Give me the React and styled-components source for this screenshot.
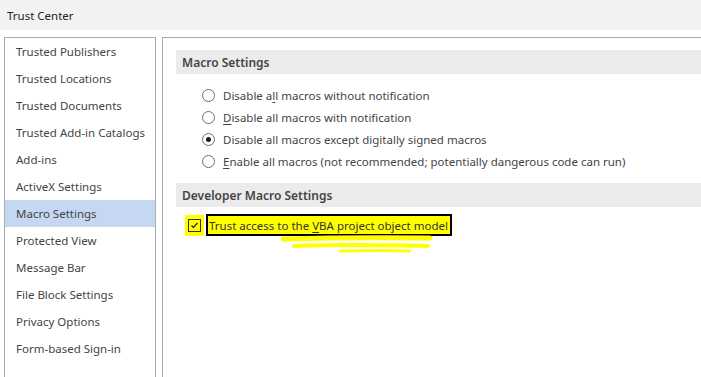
import React from 'react'
import styled, { createGlobalStyle } from 'styled-components'

const GlobalStyle = createGlobalStyle`
  body {
    margin: 0;
    background: #fff;
    font-family: "Noto Sans", "Open Sans", sans-serif;
    color: #444;
  }
`

const navItems = [
  'Trusted Publishers',
  'Trusted Locations',
  'Trusted Documents',
  'Trusted Add-in Catalogs',
  'Add-ins',
  'ActiveX Settings',
  'Macro Settings',
  'Protected View',
  'Message Bar',
  'File Block Settings',
  'Privacy Options',
  'Form-based Sign-in',
]

const Window = styled.div`
  width: 701px;
  height: 377px;
  overflow: hidden;
  display: flex;
  flex-direction: column;
`

const TitleBar = styled.div`
  height: 30px;
  background: #f2f2f2;
  padding-left: 7px;
  display: flex;
  align-items: center;
  font-size: 11.5px;
  color: #222;
`

const Body = styled.div`
  flex: 1;
  display: flex;
  gap: 6px;
  padding: 7px 0 0 4px;
`

const Nav = styled.ul`
  list-style: none;
  margin: 0;
  padding: 0;
  width: 150px;
  flex-shrink: 0;
  border: 1px solid #ababab;
  border-bottom: none;
`

const NavItem = styled.li`
  height: 27px;
  display: flex;
  align-items: center;
  padding-left: 11px;
  font-size: 11.5px;
  color: #444;
  background: ${p => (p.$active ? '#c5d7f1' : 'transparent')};
`

const Content = styled.div`
  flex: 1;
  border-top: 1px solid #ababab;
  border-left: 1px solid #ababab;
  padding: 12px 0 0 13px;
`

const SectionHead = styled.div`
  height: 24px;
  background: #ebebeb;
  display: flex;
  align-items: center;
  padding-left: 6px;
  font-size: 12px;
  font-weight: 600;
  color: #444;
  margin-bottom: ${p => p.$gap}px;
`

const Options = styled.div`
  padding-left: 26px;
  margin-bottom: 11px;
`

const OptionRow = styled.label`
  height: 22px;
  display: flex;
  align-items: center;
  gap: 8px;
  font-size: 11.5px;
  color: #444;
`

const Radio = styled.span`
  width: 11px;
  height: 11px;
  border-radius: 50%;
  border: 1px solid #6d6d6d;
  background: #fff;
  display: flex;
  align-items: center;
  justify-content: center;
  &::after {
    content: '';
    width: 5px;
    height: 5px;
    border-radius: 50%;
    background: ${p => (p.$checked ? '#1a1a1a' : 'transparent')};
  }
`

const Key = styled.span`
  text-decoration: underline;
  text-underline-offset: 2px;
`

const CheckRow = styled.div`
  position: relative;
  display: flex;
  align-items: center;
  gap: 2px;
  margin-top: 7px;
  padding-left: 9px;
  font-size: 11.5px;
`

const Marker = styled.span`
  background: #ffff00;
  padding: 4px 3px;
  display: flex;
`

const Checkbox = styled.span`
  width: 11px;
  height: 11px;
  border: 1px solid #333;
  background: #ffff00;
  display: flex;
  align-items: center;
  justify-content: center;
`

const Boxed = styled.span`
  background: #ffff00;
  border: 2px solid #000;
  height: 18px;
  display: flex;
  align-items: center;
  padding: 0 2px 0 1px;
  color: #333;
`

const Scribble = styled.svg`
  position: absolute;
  left: 104px;
  top: 21px;
  pointer-events: none;
`

export default function App() {
  return (
    <Window>
      <GlobalStyle />
      <TitleBar>Trust Center</TitleBar>
      <Body>
        <Nav>
          {navItems.map(item => (
            <NavItem key={item} $active={item === 'Macro Settings'}>
              {item}
            </NavItem>
          ))}
        </Nav>
        <Content>
          <SectionHead $gap={10}>Macro Settings</SectionHead>
          <Options>
            <OptionRow>
              <Radio />
              <span>
                Disable a<Key>l</Key>l macros without notification
              </span>
            </OptionRow>
            <OptionRow>
              <Radio />
              <span>
                <Key>D</Key>isable all macros with notification
              </span>
            </OptionRow>
            <OptionRow>
              <Radio $checked />
              <span>
                Disable all macros except di<Key>g</Key>itally signed macros
              </span>
            </OptionRow>
            <OptionRow>
              <Radio />
              <span>
                <Key>E</Key>nable all macros (not recommended; potentially dangerous code can run)
              </span>
            </OptionRow>
          </Options>
          <SectionHead $gap={0}>Developer Macro Settings</SectionHead>
          <CheckRow>
            <Marker>
              <Checkbox>
                <svg width="9" height="9" viewBox="0 0 9 9">
                  <path d="M1.5 4.5 L3.5 6.5 L7.5 2" fill="none" stroke="#222" strokeWidth="1.2" />
                </svg>
              </Checkbox>
            </Marker>
            <Boxed>
              <span>
                Trust access to the <Key>V</Key>BA project object model
              </span>
            </Boxed>
            <Scribble width="160" height="20" viewBox="0 0 160 20">
              <path d="M3 4 Q70 2 150 3" stroke="#ffff00" strokeWidth="5" fill="none" strokeLinecap="round" />
              <path d="M14 11 Q70 9 148 11" stroke="#ffff00" strokeWidth="4" fill="none" strokeLinecap="round" />
              <path d="M60 16 Q100 15 130 16" stroke="#ffff00" strokeWidth="3" fill="none" strokeLinecap="round" />
            </Scribble>
          </CheckRow>
        </Content>
      </Body>
    </Window>
  )
}
